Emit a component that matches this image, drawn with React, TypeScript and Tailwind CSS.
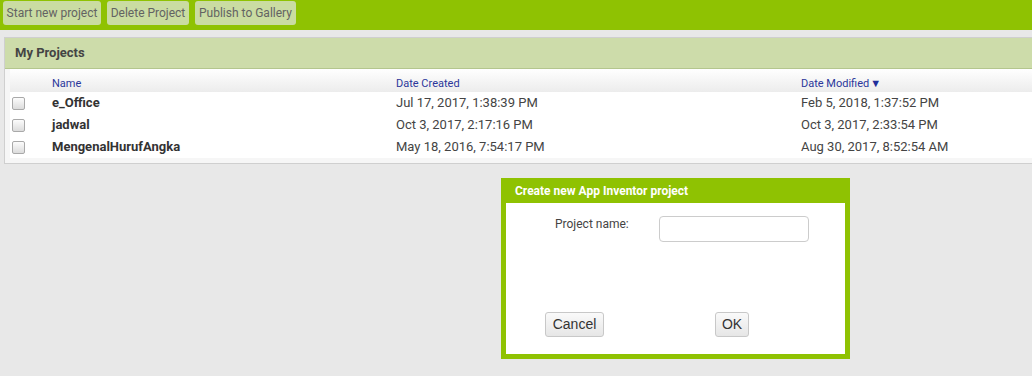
import React from "react";

const projects = [
  { name: "e_Office", created: "Jul 17, 2017, 1:38:39 PM", modified: "Feb 5, 2018, 1:37:52 PM" },
  { name: "jadwal", created: "Oct 3, 2017, 2:17:16 PM", modified: "Oct 3, 2017, 2:33:54 PM" },
  { name: "MengenalHurufAngka", created: "May 18, 2016, 7:54:17 PM", modified: "Aug 30, 2017, 8:52:54 AM" },
];

const ToolButton = ({ label, width }: { label: string; width: string }) => (
  <button
    className={`h-[24px] ${width} rounded-[3px] bg-[#cadca2] text-[12px] text-[#636363] font-['Roboto',sans-serif] flex items-center justify-center`}
  >
    {label}
  </button>
);

const Checkbox = () => (
  <span className="block w-[13px] h-[13px] rounded-[2px] border border-[#a9a9a9] bg-gradient-to-b from-[#fcfcfc] to-[#dcdcdc]" />
);

export default function App() {
  return (
    <div className="relative w-[1032px] h-[376px] overflow-hidden bg-[#e8e8e8] font-['Roboto',sans-serif]">
      {/* Toolbar */}
      <div className="h-[30px] bg-[#8fc202] flex items-start gap-[6px] pl-[3px] pt-[1px]">
        <ToolButton label="Start new project" width="w-[98px]" />
        <ToolButton label="Delete Project" width="w-[82px]" />
        <ToolButton label="Publish to Gallery" width="w-[101px]" />
      </div>

      {/* My Projects panel */}
      <div className="mt-[7px] ml-[4px] w-[1040px] border border-[#cfcfcf] bg-[#f6f6f6] pb-[5px]">
        <div className="h-[31px] bg-[#cddcaa] border-b border-[#b4c68e] flex items-center pl-[10px]">
          <span className="text-[13px] font-bold text-[#444]">My Projects</span>
        </div>
        <div className="ml-[5px] bg-white">
          <div className="grid grid-cols-[42px_344px_405px_1fr] h-[23px] items-end bg-gradient-to-b from-white to-[#ececec] text-[11px] leading-[16px] text-[#2b379b]">
            <span />
            <span>Name</span>
            <span>Date Created</span>
            <span className="flex items-center gap-[1px]">
              Date Modified<span className="text-[11px] text-[#1f2f9a]">▼</span>
            </span>
          </div>
          {projects.map((p) => (
            <div
              key={p.name}
              className="grid grid-cols-[42px_344px_405px_1fr] h-[22px] items-center text-[13px] text-[#444]"
            >
              <span className="pl-[2px]">
                <Checkbox />
              </span>
              <span className="font-bold text-[#333]">{p.name}</span>
              <span>{p.created}</span>
              <span>{p.modified}</span>
            </div>
          ))}
        </div>
      </div>

      {/* Dialog */}
      <div className="absolute left-[501px] top-[178px] w-[349px] h-[181px] bg-[#8fc202] p-[5px] pt-0 flex flex-col">
        <div className="h-[25px] flex items-center pl-[9px] text-[12px] font-bold text-white">
          Create new App Inventor project
        </div>
        <div className="flex-1 bg-white relative">
          <div className="flex items-start pt-[13px]">
            <span className="ml-[49px] w-[104px] text-[12px] text-[#444] leading-[16px]">Project name:</span>
            <div className="w-[150px] h-[26px] rounded-[4px] border border-[#cccccc] bg-white" />
          </div>
          <div className="flex items-center mt-[70px]">
            <button className="ml-[39px] w-[59px] h-[25px] rounded-[3px] border border-[#c8c8c8] bg-gradient-to-b from-[#fafafa] to-[#e6e6e6] text-[14px] text-[#333] font-['Liberation_Sans',Arial,sans-serif]">
              Cancel
            </button>
            <button className="ml-[111px] w-[34px] h-[25px] rounded-[3px] border border-[#c8c8c8] bg-gradient-to-b from-[#fafafa] to-[#e6e6e6] text-[14px] text-[#333] font-['Liberation_Sans',Arial,sans-serif]">
              OK
            </button>
          </div>
        </div>
      </div>
    </div>
  );
}
